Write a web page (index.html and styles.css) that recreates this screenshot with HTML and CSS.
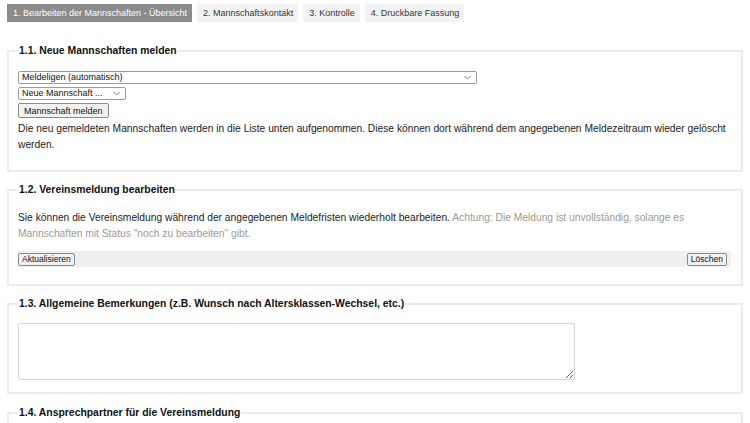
FILE: index.html
```html
<!DOCTYPE html>
<html lang="de">
<head>
<meta charset="utf-8">
<title>Vereinsmeldung</title>
<link rel="stylesheet" href="styles.css">
</head>
<body>
<nav class="tabs">
  <span class="tab active">1. Bearbeiten der Mannschaften - Übersicht</span>
  <span class="tab">2. Mannschaftskontakt</span>
  <span class="tab">3. Kontrolle</span>
  <span class="tab">4. Druckbare Fassung</span>
</nav>

<fieldset class="box box-new">
  <legend>1.1. Neue Mannschaften melden</legend>
  <div class="controls">
    <span class="selwrap sel-wide">
      <select class="sel"><option>Meldeligen (automatisch)</option></select>
      <svg class="chev" width="7" height="5" viewBox="0 0 7 5"><path d="M0.5 1 L3.5 4 L6.5 1" fill="none" stroke="#777" stroke-width="1"/></svg>
    </span>
    <span class="selwrap sel-small">
      <select class="sel"><option>Neue Mannschaft ...</option></select>
      <svg class="chev" width="7" height="5" viewBox="0 0 7 5"><path d="M0.5 1 L3.5 4 L6.5 1" fill="none" stroke="#777" stroke-width="1"/></svg>
    </span>
    <button class="btn">Mannschaft melden</button>
  </div>
  <p class="text">Die neu gemeldeten Mannschaften werden in die Liste unten aufgenommen. Diese können dort während dem angegebenen Meldezeitraum wieder gelöscht werden.</p>
</fieldset>

<fieldset class="box box-edit">
  <legend>1.2. Vereinsmeldung bearbeiten</legend>
  <p class="text">Sie können die Vereinsmeldung während der angegebenen Meldefristen wiederholt bearbeiten. <span class="muted">Achtung: Die Meldung ist unvollständig, solange es Mannschaften mit Status "noch zu bearbeiten" gibt.</span></p>
  <div class="bar">
    <button class="btn btn-small">Aktualisieren</button>
    <button class="btn btn-small">Löschen</button>
  </div>
</fieldset>

<fieldset class="box box-notes">
  <legend>1.3. Allgemeine Bemerkungen (z.B. Wunsch nach Altersklassen-Wechsel, etc.)</legend>
  <textarea class="notes"></textarea>
</fieldset>

<fieldset class="box box-contact">
  <legend>1.4. Ansprechpartner für die Vereinsmeldung</legend>
  <div class="spacer"></div>
</fieldset>
</body>
</html>
```

FILE: styles.css
```css
html, body {
  margin: 0;
  padding: 0;
  background: #fff;
}
body {
  padding: 4px 7px 0 7px;
  font-family: "Liberation Sans", Arial, sans-serif;
  color: #222;
  overflow: hidden;
}
.tabs {
  display: flex;
  gap: 5px;
  height: 18px;
}
.tab {
  display: flex;
  align-items: center;
  padding: 0 5px 0 6px;
  height: 18px;
  font-size: 9px;
  background: #f3f3f3;
  color: #333;
}
.tab.active {
  background: #8b8b8b;
  color: #fff;
}
.box {
  margin: 22px 0 0 0;
  border: 2px solid #ececec;
  padding: 0 10px 0 9px;
}
.box + .box {
  margin-top: 11px;
}
legend {
  font-size: 10.4px;
  font-weight: bold;
  color: #111;
  padding: 0 1px;
  line-height: 13px;
}
.box-new {
  padding-top: 14px;
  padding-bottom: 17px;
}
.controls {
  display: flex;
  flex-direction: column;
  align-items: flex-start;
  gap: 3px;
}
.selwrap {
  position: relative;
  display: block;
  height: 13px;
}
.sel-wide { width: 459px; }
.sel-small { width: 108px; }
.sel {
  -webkit-appearance: none;
  appearance: none;
  display: block;
  box-sizing: border-box;
  width: 100%;
  height: 13px;
  margin: 0;
  font-family: "Liberation Sans", Arial, sans-serif;
  font-size: 9px;
  line-height: 11px;
  padding: 0 12px 0 3px;
  border: 1px solid #9a9a9a;
  border-radius: 2px;
  background: #fff;
  color: #111;
}
.chev {
  position: absolute;
  right: 6px;
  top: 4px;
  pointer-events: none;
}
.btn {
  font-family: "Liberation Sans", Arial, sans-serif;
  font-size: 9px;
  height: 15px;
  margin: 0;
  padding: 0 5px;
  border: 1px solid #8a8a8a;
  border-radius: 2px;
  background: #f2f2f2;
  color: #111;
  line-height: 12px;
}
.text {
  margin: 3px 0 0 0;
  font-size: 10.25px;
  line-height: 16px;
  color: #222;
}
.muted { color: #9a9a9a; }
.box-edit {
  padding-top: 14px;
  padding-bottom: 17px;
}
.box-edit .text { margin: 0; }
.bar {
  margin-top: 9px;
  height: 16px;
  background: #efefef;
  display: flex;
  justify-content: space-between;
  align-items: center;
  padding: 0 4px 0 0;
}
.btn-small {
  font-size: 8.5px;
  height: 13px;
  padding: 0 3px;
  line-height: 10px;
}
.box-notes {
  padding-top: 13px;
  padding-bottom: 12px;
}
.notes {
  display: block;
  width: 557px;
  height: 57px;
  box-sizing: border-box;
  border: 1px solid #d6d6d6;
  border-radius: 2px;
  margin: 0;
  padding: 2px;
  resize: both;
}
.box + .box-contact {
  margin-top: 12px;
}
.box-contact {
  padding-bottom: 20px;
}
.spacer { height: 30px; }
```
